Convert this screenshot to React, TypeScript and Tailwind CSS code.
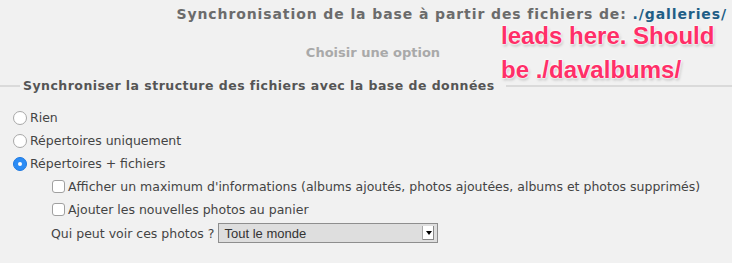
import React from 'react';

function Radio({ checked = false }: { checked?: boolean }) {
  if (checked) {
    return (
      <span className="w-[14px] h-[14px] rounded-full bg-[#2b8cf5] border border-[#1d78e0] flex items-center justify-center shrink-0">
        <span className="w-[4px] h-[4px] rounded-full bg-white" />
      </span>
    );
  }
  return <span className="w-[14px] h-[14px] rounded-full bg-white border border-[#a8a8a8] shrink-0" />;
}

function Checkbox() {
  return <span className="w-[13px] h-[13px] rounded-[3px] bg-white border border-[#a0a0a0] shrink-0" />;
}

export default function App() {
  const body = { fontFamily: '"DejaVu Sans", Verdana, sans-serif' };

  return (
    <div className="relative w-[732px] h-[263px] bg-[#f1f1f1] overflow-hidden" style={body}>
      {/* header */}
      <div className="flex justify-end pr-[5px] pt-[5px] h-[44px]">
        <h1 className="text-[14px] font-bold tracking-[0.9px] text-[#6b6b6b] leading-[18px]">
          Synchronisation de la base à partir des fichiers de: <span className="text-[#1f5e86]">./galleries/</span>
        </h1>
      </div>

      <div className="flex justify-center pl-[14px] h-[32px]">
        <span className="text-[13px] font-bold text-[#a9a9a9] leading-[18px]">Choisir une option</span>
      </div>

      {/* legend row */}
      <div className="flex items-center h-[18px] mt-[1px]">
        <div className="w-[20px] h-[2px] bg-[#dadada]" />
        <span className="pl-[3px] pr-[11px] text-[12.5px] font-bold tracking-[0.47px] text-[#555] leading-[18px]">
          Synchroniser la structure des fichiers avec la base de données
        </span>
        <div className="flex-1 h-[2px] bg-[#dadada]" />
      </div>

      {/* options */}
      <div className="pl-[13px] pt-[11px] text-[12.5px] text-[#444] leading-[23px]">
        <div className="flex items-center gap-[3px] h-[23px]">
          <Radio />
          <span>Rien</span>
        </div>
        <div className="flex items-center gap-[3px] h-[23px]">
          <Radio />
          <span>Répertoires uniquement</span>
        </div>
        <div className="flex items-center gap-[3px] h-[23px]">
          <Radio checked />
          <span>Répertoires + fichiers</span>
        </div>

        <div className="pl-[39px]">
          <div className="flex items-center gap-[3px] h-[23px]">
            <Checkbox />
            <span>Afficher un maximum d'informations (albums ajoutés, photos ajoutées, albums et photos supprimés)</span>
          </div>
          <div className="flex items-center gap-[3px] h-[23px]">
            <Checkbox />
            <span>Ajouter les nouvelles photos au panier</span>
          </div>
        </div>

        <div className="pl-[38px] flex items-center gap-[4px] h-[24px]">
          <span>Qui peut voir ces photos ?</span>
          <div className="w-[220px] h-[20px] bg-[#dedede] border border-[#8e8e8e] flex items-center justify-between pl-[5px] pr-[3px]">
            <span className="text-[13px] text-[#333]" style={{ fontFamily: '"Liberation Sans", Arial, sans-serif' }}>
              Tout le monde
            </span>
            <span className="w-[12px] h-[14px] bg-white border-l border-[#aaa] flex items-center justify-center shadow-[inset_-1px_-1px_0_#888]">
              <span className="w-0 h-0 border-l-[3px] border-r-[3px] border-t-[4px] border-l-transparent border-r-transparent border-t-black" />
            </span>
          </div>
        </div>
      </div>

      {/* annotation overlay */}
      <div
        className="absolute left-[501px] top-[19px] text-[24px] font-bold text-[#ff2f68] leading-[34px]"
        style={{
          fontFamily: '"Liberation Sans", Arial, sans-serif',
          textShadow: '0 0 2px #fff, 0 0 2px #fff, 0 0 3px #fff, 1px 2px 3px rgba(0,0,0,0.25)',
        }}
      >
        <div>leads here. Should</div>
        <div>be ./davalbums/</div>
      </div>
    </div>
  );
}
